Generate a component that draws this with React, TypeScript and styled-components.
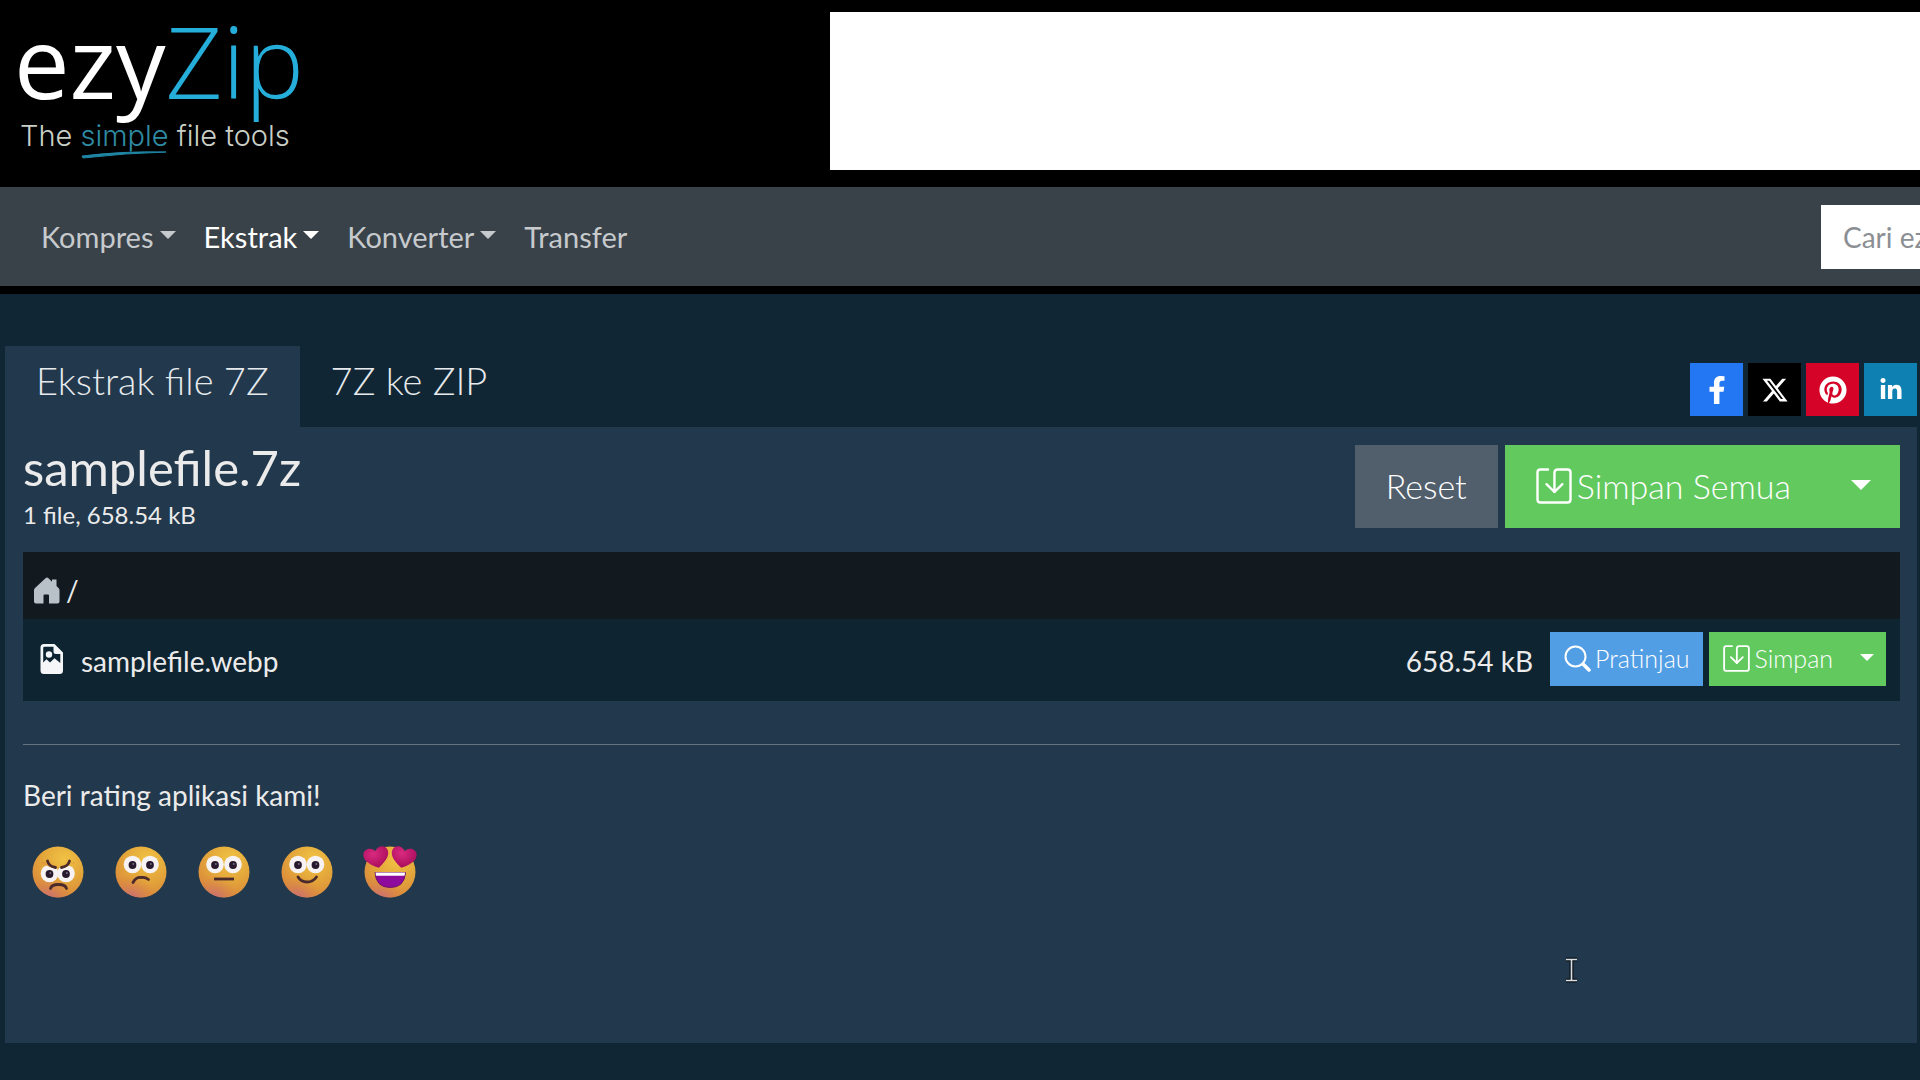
import React from "react";
import styled, { createGlobalStyle } from "styled-components";
import { FaFacebookF, FaPinterest, FaLinkedinIn } from "react-icons/fa";
import { FaXTwitter } from "react-icons/fa6";

const GlobalStyle = createGlobalStyle`
  *, *::before, *::after { box-sizing: border-box; }
  html { background: #112634; }
  body {
    margin: 0;
    background: #112634;
    color: #ebebeb;
    font-family: Lato, "Noto Sans", sans-serif;
    font-size: 28px;
    line-height: 40px;
    overflow-x: hidden;
  }
  button, input { font-family: inherit; }
`;

const Header = styled.header`
  display: grid;
  grid-template-columns: 830fr 1090fr;
  height: 187px;
  padding: 12px 0 17px;
  background: #000;
`;

const LogoLink = styled.a`
  display: block;
  padding-left: 16px;
  text-decoration: none;
`;

const Logo = styled.svg`
  display: block;
  width: 284px;
  height: 152px;
  overflow: visible;
`;

const Banner = styled.aside`
  background: #fff;
`;

const Nav = styled.nav`
  display: flex;
  align-items: center;
  justify-content: space-between;
  height: 107px;
  padding-left: 41px;
  background: #3a4249;
  border-bottom: 8px solid #000;
  overflow: hidden;
`;

const NavList = styled.ul`
  display: flex;
  gap: 28px;
  margin: 0;
  padding: 0;
  list-style: none;
`;

const NavLink = styled.a<{ $active?: boolean }>`
  display: flex;
  align-items: center;
  gap: 6px;
  color: ${(p) => (p.$active ? "#ffffff" : "#c6cacd")};
  font-size: 29px;
  text-decoration: none;
`;

const Caret = styled.span<{ $size: number }>`
  width: 0;
  height: 0;
  border: ${(p) => p.$size}px solid transparent;
  border-top-color: currentColor;
  border-bottom: 0;
`;

const NavCaret = styled(Caret)`
  margin-bottom: 4px;
`;

const SearchSlot = styled.form`
  flex: 0 0 99px;
  min-width: 0;
`;

const SearchInput = styled.input`
  display: block;
  width: 360px;
  height: 64px;
  padding: 0 22px;
  border: 0;
  background: #fff;
  color: #444;
  font-size: 28px;
  &::placeholder { color: #8b8f94; opacity: 1; }
`;

const Main = styled.main`
  padding: 52px 3px 37px 5px;
`;

const TabBar = styled.div`
  display: flex;
  justify-content: space-between;
  align-items: flex-end;
`;

const Tabs = styled.div`
  display: flex;
`;

const Tab = styled.a<{ $active?: boolean }>`
  height: 81px;
  padding: 10px 31px 0;
  background: ${(p) => (p.$active ? "#22384c" : "transparent")};
  color: #e6eaed;
  font-size: 38px;
  line-height: 48px;
  font-weight: 300;
  text-decoration: none;
`;

const Share = styled.div`
  display: flex;
  gap: 5px;
  padding-bottom: 11px;
`;

const ShareLink = styled.a<{ $color: string }>`
  display: flex;
  align-items: center;
  justify-content: center;
  width: 53px;
  height: 53px;
  background: ${(p) => p.$color};
  color: #fff;
  font-size: 28px;
`;

const Panel = styled.section`
  padding: 18px 17px 144px 18px;
  background: #22384c;
`;

const Summary = styled.div`
  display: flex;
  justify-content: space-between;
  align-items: flex-start;
  height: 107px;
`;

const ArchiveName = styled.h1`
  margin: 0;
  font-size: 49px;
  line-height: 44px;
  font-weight: 400;
`;

const ArchiveInfo = styled.p`
  margin: 0;
  font-size: 24px;
  line-height: 52px;
`;

const Actions = styled.div<{ $gap: number }>`
  display: flex;
  gap: ${(p) => p.$gap}px;
`;

const Group = styled.div`
  display: flex;
`;

const Button = styled.button<{ $tone: string; $small?: boolean }>`
  display: flex;
  align-items: center;
  justify-content: center;
  gap: ${(p) => (p.$small ? 4 : 5)}px;
  height: ${(p) => (p.$small ? 54 : 83)}px;
  padding: 0 ${(p) => (p.$small ? 14 : 31)}px 2px;
  border: 0;
  background: ${(p) => p.$tone};
  color: #fff;
  font-size: ${(p) => (p.$small ? 25 : 34)}px;
  font-weight: 300;
  white-space: nowrap;
`;

const MenuButton = styled(Button)`
  width: ${(p) => (p.$small ? 39 : 78)}px;
  padding: 0 0 4px;
`;

const Icon = styled.svg<{ $size: number }>`
  display: block;
  flex: none;
  width: ${(p) => p.$size}px;
  height: ${(p) => p.$size}px;
`;

const FileTable = styled.table`
  width: 100%;
  border-collapse: collapse;
  th, td { padding: 0; font-weight: 400; text-align: left; }
`;

const PathCell = styled.th`
  height: 67px;
  background: #12191f;
`;

const Path = styled.div`
  display: flex;
  align-items: center;
  gap: 5px;
  padding: 8px 10px 0;
`;

const FileCell = styled.td`
  height: 82px;
  background: #0f2431;
`;

const FileRow = styled.div`
  display: flex;
  align-items: center;
  padding: 0 14px 2px 14px;
`;

const FileName = styled.span`
  flex: 1;
  padding: 4px 0 0 14px;
`;

const FileSize = styled.span`
  padding: 4px 17px 0 0;
`;

const Rule = styled.hr`
  height: 1px;
  margin: 43px 0 30px;
  border: 0;
  background: #66737f;
`;

const RatingTitle = styled.p`
  margin: 0;
`;

const Ratings = styled.div`
  display: flex;
  gap: 29px;
  padding: 30px 0 0 8px;
`;

const FaceButton = styled.button`
  width: 54px;
  height: 54px;
  padding: 0;
  border: 0;
  background: none;
`;

const Pointer = styled.svg`
  position: absolute;
  left: 1565px;
  top: 957px;
  width: 13px;
  height: 27px;
`;

const SaveIcon = ({ size }: { size: number }) => (
  <Icon $size={size} viewBox="0 0 24 24" fill="none" stroke="currentColor" strokeWidth="1.6" strokeLinecap="round" strokeLinejoin="round" aria-hidden="true">
    <path d="M8 1H3Q1 1 1 3V21Q1 23 3 23H21Q23 23 23 21V3Q23 1 21 1H14.500Q12.300 1 12.300 3.200V15.800" />
    <path d="M7 10.800L12.300 16L17.600 10.800" />
  </Icon>
);

const SearchIcon = () => (
  <Icon $size={27} viewBox="0 0 27 27" fill="none" stroke="currentColor" strokeLinecap="round" aria-hidden="true">
    <circle cx="11.500" cy="11.500" r="10" strokeWidth="2" />
    <path d="M19.500 19.500L25 25" strokeWidth="3.500" />
  </Icon>
);

const HomeIcon = () => (
  <Icon $size={28} viewBox="0 0 28 28" aria-hidden="true">
    <path fill="#b9c1c8" d="M14 1.500Q13.200 1.500 12.500 2.200L2 12Q1 13 1 14.200V25.500Q1 27.500 3 27.500H10.500V19.500Q10.500 18.500 11.500 18.500H15Q16 18.500 16 19.500V27.500H24.500Q26.500 27.500 26.500 25.500V14.200Q26.500 13 25.500 12L23.500 10V3.500H19V5.800L15.500 2.200Q14.800 1.500 14 1.500Z" />
  </Icon>
);

const ImageFileIcon = () => (
  <Icon $size={30} viewBox="0 0 30 30" aria-hidden="true">
    <path fill="#f4f6f8" fillRule="evenodd" d="M7 0H17.500L26 8.500V26.500Q26 30 22.500 30H7Q3.500 30 3.500 26.500V3.500Q3.500 0 7 0ZM7.500 2.800Q6.200 2.800 6.200 4.200V18.500L9.500 15.200L13 18.500L17.500 14.200L23.300 19V10H19Q16.500 10 16.500 7.500V2.800Z" />
    <circle cx="12" cy="10.500" r="3.200" fill="#f4f6f8" />
  </Icon>
);

type Mood = "angry" | "sad" | "neutral" | "happy" | "love";

const Eye = ({ x, y }: { x: number; y: number }) => (
  <g stroke="none">
    <circle cx={x} cy={y} r="8.800" fill="#f7f3f4" />
    <circle cx={x} cy={y + 0.5} r="3.900" fill="#281a2c" />
    <circle cx={x + 0.8} cy={y - 0.4} r="1" fill="#716a83" />
  </g>
);

const Heart = ({ x, turn }: { x: number; turn: number }) => (
  <g transform={`translate(${x} 12) rotate(${turn})`}>
    <path d="M0 11C-8 6-12.500 2-12.500-3.500C-12.500-10-4-12 0-6C4-12 12.500-10 12.500-3.500C12.500 2 8 6 0 11Z" fill="url(#heart)" />
  </g>
);

const Face = ({ mood }: { mood: Mood }) => (
  <Icon $size={54} viewBox="0 0 54 54" aria-hidden="true">
    <circle cx="27" cy="27" r="25.500" fill="url(#skin)" />
    <circle cx="27" cy="27" r="25.500" fill="url(#blush)" />
    <g fill="none" stroke="#4b2a2b" strokeWidth="2.800" strokeLinecap="round">
      {mood === "angry" && (
        <>
          <Eye x={18.5} y={28.5} />
          <Eye x={35} y={28.5} />
          <path d="M10 17H23L24.500 22.500L29.500 22.500L31 17H44V18L33 23H21L10 18Z" fill="url(#skin)" stroke="none" />
          <path d="M16.500 16Q18 21.500 24.500 22.500M38.500 16Q37 21.500 30.500 22.500" />
          <path d="M19.500 43.500Q20.500 39.500 27.500 39.500Q34.500 39.500 35.500 43.500" />
        </>
      )}
      {mood === "sad" && (
        <>
          <Eye x={18.5} y={19.5} />
          <Eye x={36} y={19.5} />
          <path d="M19 37.500Q22 31.500 28 32.500Q31.500 32.200 34.500 34.500" />
        </>
      )}
      {mood === "neutral" && (
        <>
          <Eye x={18} y={19.5} />
          <Eye x={36} y={19.5} />
          <path d="M17 34H37" strokeLinecap="butt" />
        </>
      )}
      {mood === "happy" && (
        <>
          <Eye x={18} y={19.5} />
          <Eye x={35.5} y={19.5} />
          <path d="M18 32Q21 37 27 37Q33 37 36.500 32" />
        </>
      )}
    </g>
    {mood === "love" && (
      <>
        <path d="M12 27.500H42.500Q41.500 42.500 27.300 42.500Q13 42.500 12 27.500Z" fill="#8e0a9c" stroke="#6c1468" strokeWidth="1" />
        <path d="M12.500 27.500H42.200L41.500 30.800H13Z" fill="#fff" />
        <Heart x={13.5} turn={-12} />
        <Heart x={40.5} turn={12} />
      </>
    )}
  </Icon>
);

const moods: { mood: Mood; label: string }[] = [
  { mood: "angry", label: "Sangat buruk" },
  { mood: "sad", label: "Buruk" },
  { mood: "neutral", label: "Biasa" },
  { mood: "happy", label: "Baik" },
  { mood: "love", label: "Sangat baik" },
];

const GradientDefs = styled.svg`
  display: block;
  width: 0;
  height: 0;
`;

const Gradients = () => (
  <GradientDefs aria-hidden="true">
    <defs>
      <radialGradient id="skin" cx="0.620" cy="0.250" r="0.800">
        <stop offset="0" stopColor="#f0c244" />
        <stop offset="0.550" stopColor="#e3a53a" />
        <stop offset="1" stopColor="#d9863c" />
      </radialGradient>
      <radialGradient id="blush" cx="0.300" cy="1.050" r="0.500">
        <stop offset="0" stopColor="#c86a86" />
        <stop offset="1" stopColor="#d9803f" stopOpacity="0" />
      </radialGradient>
      <radialGradient id="heart" cx="0.400" cy="0.300" r="0.700">
        <stop offset="0" stopColor="#d92a7e" />
        <stop offset="1" stopColor="#a80c5c" />
      </radialGradient>
    </defs>
  </GradientDefs>
);

export default function App() {
  return (
    <>
      <GlobalStyle />
      <Header>
        <LogoLink href="#" aria-label="ezyZip">
          <Logo viewBox="0 0 284 152">
            <text x="-2" y="87" fontFamily="Open Sans, Noto Sans, sans-serif" fontSize="99" fill="#fff">
              ezy<tspan fontWeight="300" fill="#26aedb">Zip</tspan>
            </text>
            <text x="4" y="134" fontFamily="Inter, Liberation Sans, sans-serif" fontSize="29" fontWeight="300" fill="#c9cfc6">
              The <tspan fill="#2f8ba3">simple</tspan> file tools
            </text>
            <path d="M66 144Q106 139 150 140Q110 141 67 146Z" fill="#1f86a5" stroke="#1f86a5" strokeWidth="1" />
          </Logo>
        </LogoLink>
        <Banner />
      </Header>

      <Nav>
        <NavList>
          <li><NavLink href="#">Kompres<NavCaret $size={8} /></NavLink></li>
          <li><NavLink href="#" $active>Ekstrak<NavCaret $size={8} /></NavLink></li>
          <li><NavLink href="#">Konverter<NavCaret $size={8} /></NavLink></li>
          <li><NavLink href="#">Transfer</NavLink></li>
        </NavList>
        <SearchSlot>
          <SearchInput type="search" placeholder="Cari ezyZip" aria-label="Cari ezyZip" />
        </SearchSlot>
      </Nav>

      <Main>
        <TabBar>
          <Tabs>
            <Tab href="#" $active>Ekstrak file 7Z</Tab>
            <Tab href="#">7Z ke ZIP</Tab>
          </Tabs>
          <Share>
            <ShareLink href="#" $color="#2477f2" aria-label="Facebook"><FaFacebookF /></ShareLink>
            <ShareLink href="#" $color="#000000" aria-label="X"><FaXTwitter /></ShareLink>
            <ShareLink href="#" $color="#d50327" aria-label="Pinterest"><FaPinterest /></ShareLink>
            <ShareLink href="#" $color="#0f80b2" aria-label="LinkedIn"><FaLinkedinIn size={24} /></ShareLink>
          </Share>
        </TabBar>

        <Panel>
          <Summary>
            <div>
              <ArchiveName>samplefile.7z</ArchiveName>
              <ArchiveInfo>1 file, 658.54 kB</ArchiveInfo>
            </div>
            <Actions $gap={7}>
              <Button type="button" $tone="#515e6b">Reset</Button>
              <Group>
                <Button type="button" $tone="#62c95f"><SaveIcon size={36} />Simpan Semua</Button>
                <MenuButton type="button" $tone="#62c95f" aria-label="Opsi simpan semua"><Caret $size={10} /></MenuButton>
              </Group>
            </Actions>
          </Summary>

          <FileTable>
            <thead>
              <tr><PathCell><Path><HomeIcon />/</Path></PathCell></tr>
            </thead>
            <tbody>
              <tr>
                <FileCell>
                  <FileRow>
                    <ImageFileIcon />
                    <FileName>samplefile.webp</FileName>
                    <FileSize>658.54 kB</FileSize>
                    <Actions $gap={6}>
                      <Button type="button" $small $tone="#529ee5"><SearchIcon />Pratinjau</Button>
                      <Group>
                        <Button type="button" $small $tone="#62c95f"><SaveIcon size={27} />Simpan</Button>
                        <MenuButton type="button" $small $tone="#62c95f" aria-label="Opsi simpan"><Caret $size={7} /></MenuButton>
                      </Group>
                    </Actions>
                  </FileRow>
                </FileCell>
              </tr>
            </tbody>
          </FileTable>

          <Rule />
          <RatingTitle>Beri rating aplikasi kami!</RatingTitle>
          <Gradients />
          <Ratings>
            {moods.map(({ mood, label }) => (
              <FaceButton key={mood} type="button" aria-label={label}><Face mood={mood} /></FaceButton>
            ))}
          </Ratings>
        </Panel>
      </Main>

      <Pointer viewBox="0 0 13 27" aria-hidden="true">
        <path d="M1 2.500H12M1 23.500H12M6.500 2.500V23.500" fill="none" stroke="#0c1318" strokeWidth="4" />
        <path d="M1 2.500H12M1 23.500H12M6.500 2.500V23.500" fill="none" stroke="#d7dfe4" strokeWidth="1.600" />
      </Pointer>
    </>
  );
}
